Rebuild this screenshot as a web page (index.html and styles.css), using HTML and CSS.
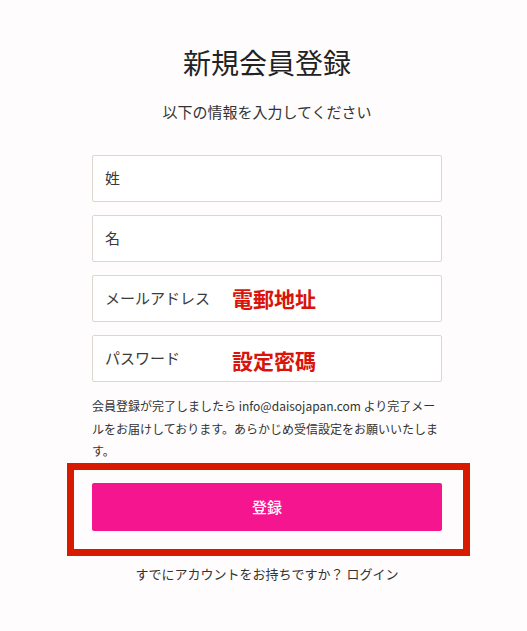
FILE: index.html
```html
<!DOCTYPE html>
<html lang="ja">
<head>
<meta charset="utf-8">
<title>新規会員登録</title>
<link rel="stylesheet" href="styles.css">
</head>
<body>
<main class="page">
  <h1 class="title">新規会員登録</h1>
  <p class="subtitle">以下の情報を入力してください</p>
  <form class="form">
    <div class="field"><input class="input" type="text" placeholder="姓"></div>
    <div class="field"><input class="input" type="text" placeholder="名"></div>
    <div class="field">
      <input class="input" type="email" placeholder="メールアドレス">
      <span class="note-red note-email">電郵地址</span>
    </div>
    <div class="field">
      <input class="input" type="password" placeholder="パスワード">
      <span class="note-red note-pass">設定密碼</span>
    </div>
    <p class="notice">会員登録が完了しましたら info@daisojapan.com より完了メールをお届けしております。あらかじめ受信設定をお願いいたします。</p>
    <div class="submit-wrap">
      <button class="submit" type="button">登録</button>
      <span class="highlight"></span>
    </div>
  </form>
  <p class="login">すでにアカウントをお持ちですか？ ログイン</p>
</main>
</body>
</html>
```

FILE: styles.css
```css
html, body {
  margin: 0;
  padding: 0;
  background: #fefcfc;
}
body {
  font-family: "Noto Sans CJK JP", "Noto Sans", sans-serif;
  color: #333;
}
.page {
  width: 350px;
  margin-left: 92px;
  padding-top: 42px;
  display: flex;
  flex-direction: column;
}
.title {
  margin: 0;
  font-size: 28px;
  line-height: 40px;
  font-weight: 400;
  color: #222;
  text-align: center;
}
.subtitle {
  margin: 18px 0 0;
  font-size: 15px;
  line-height: 24px;
  text-align: center;
  color: #333;
}
.form {
  margin-top: 31px;
  display: flex;
  flex-direction: column;
  gap: 13px;
}
.field {
  position: relative;
}
.input {
  box-sizing: border-box;
  display: block;
  width: 350px;
  height: 47px;
  margin: 0;
  padding: 0 12px 2px;
  border: 1px solid #dcd7cf;
  border-radius: 2px;
  background: #fff;
  font-family: inherit;
  font-size: 15px;
  color: #333;
  outline: none;
}
.input::placeholder {
  color: #3a3a3a;
  opacity: 1;
}
.note-red {
  position: absolute;
  left: 140px;
  font-family: "Noto Sans CJK TC", "Noto Sans CJK JP", sans-serif;
  font-weight: 700;
  font-size: 21px;
  line-height: 28px;
  color: #d9140b;
  pointer-events: none;
}
.note-email { top: 9px; }
.note-pass { top: 11px; }
.notice {
  margin: 0;
  font-size: 12px;
  line-height: 22.5px;
  color: #333;
}
.submit-wrap {
  position: relative;
  margin-top: 7px;
}
.submit {
  display: block;
  width: 350px;
  height: 48px;
  border: none;
  border-radius: 2px;
  background: #f5158e;
  color: #fff;
  font-family: inherit;
  font-size: 15px;
  font-weight: 500;
  cursor: pointer;
}
.highlight {
  position: absolute;
  left: -25px;
  top: -20px;
  width: 403px;
  height: 93px;
  box-sizing: border-box;
  border: 7px solid #d71a00;
  pointer-events: none;
}
.login {
  margin: 33px 0 0;
  font-size: 13px;
  line-height: 20px;
  text-align: center;
  color: #333;
}
```
